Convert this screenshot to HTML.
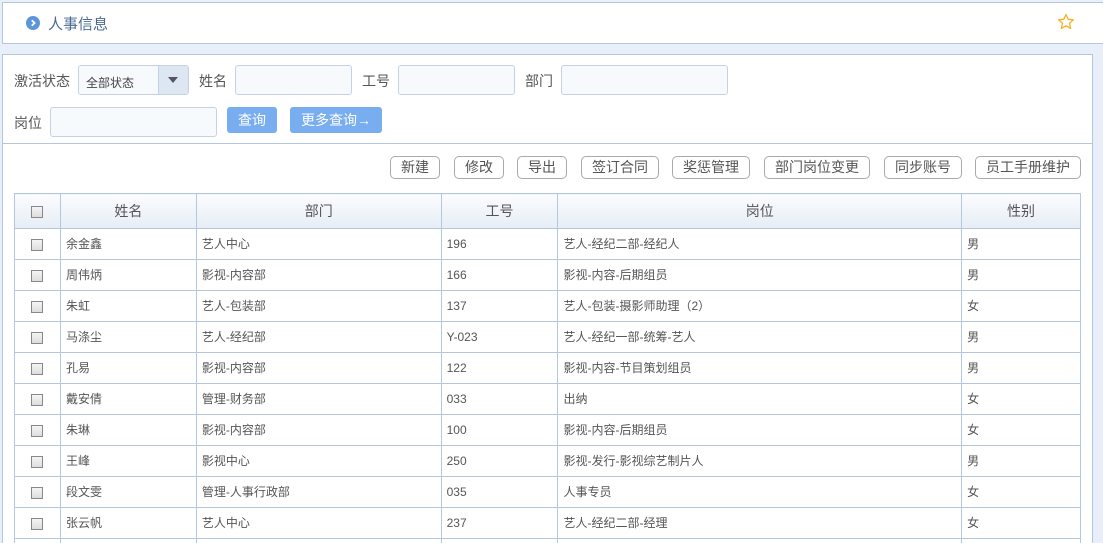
<!DOCTYPE html>
<html style="overflow:hidden;height:543px"><head><meta charset="utf-8"><style>
*{box-sizing:border-box;margin:0;padding:0}
body{width:1103px;height:543px;overflow:hidden;background:#e9eff8;font-family:"Liberation Sans","Noto Sans CJK SC",sans-serif;font-size:13px;color:#555;position:relative}
.abs{position:absolute}
.top{left:2px;top:2px;width:1101px;height:42px;background:#fff;border:1px solid #b3c7de;border-right:none}
.main{left:2px;top:54px;width:1091px;height:489px;background:#fff;border:1px solid #b3c7de;border-bottom:none}
.lbl{font-size:14px;color:#555}
.inp{background:#f7fafd;border:1px solid #c4d3e4;border-radius:3px;height:30px}
.btnb{background:#78aef0;color:#fff;border-radius:3px;font-size:14px;text-align:center;line-height:26px;height:26px}
.btn{border:1px solid #aaa;border-radius:5px;height:23px;line-height:21px;text-align:center;font-size:14px;color:#555;background:#fff}
table{position:absolute;left:14px;top:193px;border-collapse:collapse;width:1067px}
td,th{border:1px solid #b3c7de;height:31px;padding:0 5px;font-weight:normal;font-size:12px;color:#555;text-align:left;vertical-align:middle;line-height:14px}
th{height:35px;font-size:14px;text-align:center;background:linear-gradient(#fbfcfe,#e6edf6)}
td.c,th.c{text-align:center}
.cb{display:inline-block;width:12px;height:12px;border:1px solid #888;background:linear-gradient(#f4f4f4,#ddd);vertical-align:middle}
.vl{position:absolute;top:538px;width:1px;height:5px;background:#b3c7de}
</style></head><body>
<div class="abs top"></div>
<svg class="abs" style="left:26px;top:16px" width="14" height="14" viewBox="0 0 14 14"><circle cx="7" cy="7" r="7" fill="#5d96d8"/><path d="M5.8 4.3L8.5 7 5.8 9.7" fill="none" stroke="#fff" stroke-width="1.8"/></svg>
<div class="abs" style="left:48px;top:13px;font-size:15px;color:#4a6a95">人事信息</div>
<svg class="abs" style="left:1057px;top:13px" width="18" height="18" viewBox="0 0 18 18"><path d="M9 1.5l2.2 4.8 5.2.5-3.9 3.5 1.1 5.1L9 12.8l-4.6 2.6 1.1-5.1L1.6 6.8l5.2-.5z" fill="none" stroke="#f5b323" stroke-width="1.3" stroke-linejoin="round"/></svg>
<div class="abs main"></div>
<div class="abs" style="left:2px;top:143px;width:1091px;height:1px;background:#b3c7de"></div>
<div class="abs lbl" style="left:14px;top:71px">激活状态</div>
<div class="abs inp" style="left:78px;top:65px;width:111px;background:#f7fafd"></div>
<div class="abs" style="left:86px;top:74px;font-size:12px;color:#444">全部状态</div>
<div class="abs" style="left:158px;top:66px;width:30px;height:28px;background:#dde7f3;border-left:1px solid #c4d3e4"></div>
<div class="abs" style="left:168px;top:77px;width:0;height:0;border-left:5px solid transparent;border-right:5px solid transparent;border-top:6px solid #556"></div>
<div class="abs lbl" style="left:199px;top:71px">姓名</div>
<div class="abs inp" style="left:235px;top:65px;width:117px"></div>
<div class="abs lbl" style="left:362px;top:71px">工号</div>
<div class="abs inp" style="left:398px;top:65px;width:117px"></div>
<div class="abs lbl" style="left:525px;top:71px">部门</div>
<div class="abs inp" style="left:561px;top:65px;width:167px"></div>
<div class="abs lbl" style="left:14px;top:113px">岗位</div>
<div class="abs inp" style="left:50px;top:107px;width:167px"></div>
<div class="abs btnb" style="left:227px;top:107px;width:50px">查询</div>
<div class="abs btnb" style="left:290px;top:107px;width:92px">更多查询→</div>
<div class="abs btn" style="left:390px;top:156px;width:50px">新建</div>
<div class="abs btn" style="left:454px;top:156px;width:50px">修改</div>
<div class="abs btn" style="left:517px;top:156px;width:50px">导出</div>
<div class="abs btn" style="left:581px;top:156px;width:78px">签订合同</div>
<div class="abs btn" style="left:672px;top:156px;width:78px">奖惩管理</div>
<div class="abs btn" style="left:764px;top:156px;width:106px">部门岗位变更</div>
<div class="abs btn" style="left:884px;top:156px;width:78px">同步账号</div>
<div class="abs btn" style="left:975px;top:156px;width:106px">员工手册维护</div>
<table>
<colgroup><col style="width:46px"><col style="width:136px"><col style="width:245px"><col style="width:117px"><col style="width:404px"><col style="width:119px"></colgroup>
<tr><th class="c"><span class="cb"></span></th><th>姓名</th><th>部门</th><th>工号</th><th>岗位</th><th>性别</th></tr>
<tr><td class="c"><span class="cb"></span></td><td>余金鑫</td><td>艺人中心</td><td>196</td><td>艺人-经纪二部-经纪人</td><td>男</td></tr>
<tr><td class="c"><span class="cb"></span></td><td>周伟炳</td><td>影视-内容部</td><td>166</td><td>影视-内容-后期组员</td><td>男</td></tr>
<tr><td class="c"><span class="cb"></span></td><td>朱虹</td><td>艺人-包装部</td><td>137</td><td>艺人-包装-摄影师助理（2）</td><td>女</td></tr>
<tr><td class="c"><span class="cb"></span></td><td>马涤尘</td><td>艺人-经纪部</td><td>Y-023</td><td>艺人-经纪一部-统筹-艺人</td><td>男</td></tr>
<tr><td class="c"><span class="cb"></span></td><td>孔易</td><td>影视-内容部</td><td>122</td><td>影视-内容-节目策划组员</td><td>男</td></tr>
<tr><td class="c"><span class="cb"></span></td><td>戴安倩</td><td>管理-财务部</td><td>033</td><td>出纳</td><td>女</td></tr>
<tr><td class="c"><span class="cb"></span></td><td>朱琳</td><td>影视-内容部</td><td>100</td><td>影视-内容-后期组员</td><td>女</td></tr>
<tr><td class="c"><span class="cb"></span></td><td>王峰</td><td>影视中心</td><td>250</td><td>影视-发行-影视综艺制片人</td><td>男</td></tr>
<tr><td class="c"><span class="cb"></span></td><td>段文雯</td><td>管理-人事行政部</td><td>035</td><td>人事专员</td><td>女</td></tr>
<tr><td class="c"><span class="cb"></span></td><td>张云帆</td><td>艺人中心</td><td>237</td><td>艺人-经纪二部-经理</td><td>女</td></tr>
</table>
<div class="vl" style="left:14px"></div><div class="vl" style="left:60px"></div><div class="vl" style="left:196px"></div><div class="vl" style="left:441px"></div><div class="vl" style="left:557px"></div><div class="vl" style="left:961px"></div><div class="vl" style="left:1080px"></div>
</body></html>
